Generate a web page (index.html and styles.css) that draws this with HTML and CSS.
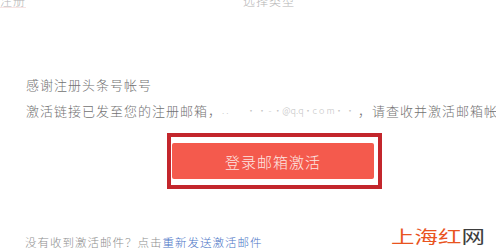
FILE: index.html
```html
<!DOCTYPE html>
<html lang="zh-CN">
<head>
<meta charset="utf-8">
<link rel="stylesheet" href="styles.css">
</head>
<body>
<div class="steps">
  <span class="step step-done">注册</span>
  <span class="step">选择类型</span>
</div>
<div class="main">
  <p class="thanks">感谢注册头条号帐号</p>
  <p class="notice">激活链接已发至您的注册邮箱，<span class="mask">. .&nbsp;&nbsp;&nbsp;&nbsp;&nbsp;&nbsp;&nbsp;&nbsp;&nbsp;·&nbsp;·&nbsp;-&nbsp;·@q.q·c&nbsp;o&nbsp;m·&nbsp;·&nbsp;·&nbsp;.</span>，请查收并激活邮箱帐号</p>
  <div class="highlight">
    <div class="btn">登录邮箱激活</div>
  </div>
  <p class="footer">没有收到激活邮件？点击<a class="link">重新发送激活邮件</a></p>
</div>
<div class="watermark"><span class="wm-red">上海红</span><span class="wm-dark">网</span></div>
</body>
</html>
```
FILE: styles.css
```css
html, body {
  margin: 0;
  padding: 0;
  background: #fff;
}
body {
  width: 496px;
  height: 251px;
  overflow: hidden;
  position: relative;
  font-family: "Noto Sans CJK SC", "Noto Sans", sans-serif;
  font-weight: 300;
}
p { margin: 0; }
.steps {
  display: flex;
  gap: 217px;
  margin-top: -6px;
  height: 14px;
  line-height: 14px;
  font-size: 12px;
  letter-spacing: 1px;
  color: #b4b4b4;
}
.step-done {
  width: 26px;
  border-bottom: 1px solid #f7e4e4;
}
.main {
  margin-top: 64px;
  padding-left: 26px;
}
.thanks, .notice {
  line-height: 26px;
  font-size: 13px;
  letter-spacing: 1px;
  color: #727272;
  white-space: nowrap;
}
.mask {
  display: inline-block;
  width: 136px;
  font-size: 9px;
  letter-spacing: 0;
  color: #c4c4c4;
  text-align: right;
  overflow: hidden;
  vertical-align: bottom;
}
.highlight {
  width: fit-content;
  margin: 9px 0 0 141px;
  border: 4px solid #c3262c;
  padding: 6px 4px 6px 1px;
}
.btn {
  width: 202px;
  height: 36px;
  background: #f45a4d;
  border-radius: 2px;
  color: #fde6e2;
  font-size: 15px;
  letter-spacing: 1px;
  display: flex;
  align-items: center;
  justify-content: center;
}
.footer {
  margin: 45px 0 0 -1px;
  line-height: 16px;
  font-size: 11.5px;
  letter-spacing: 1px;
  color: #8e8e8e;
  white-space: nowrap;
}
.link {
  color: #4a74c6;
}
.watermark {
  position: absolute;
  left: 391px;
  top: 226px;
  font-size: 17px;
  font-weight: 400;
  line-height: 20px;
  white-space: nowrap;
  transform: scaleX(1.38);
  transform-origin: left center;
}
.wm-red { color: #e9541f; }
.wm-dark { color: #3d3d3d; }
```
